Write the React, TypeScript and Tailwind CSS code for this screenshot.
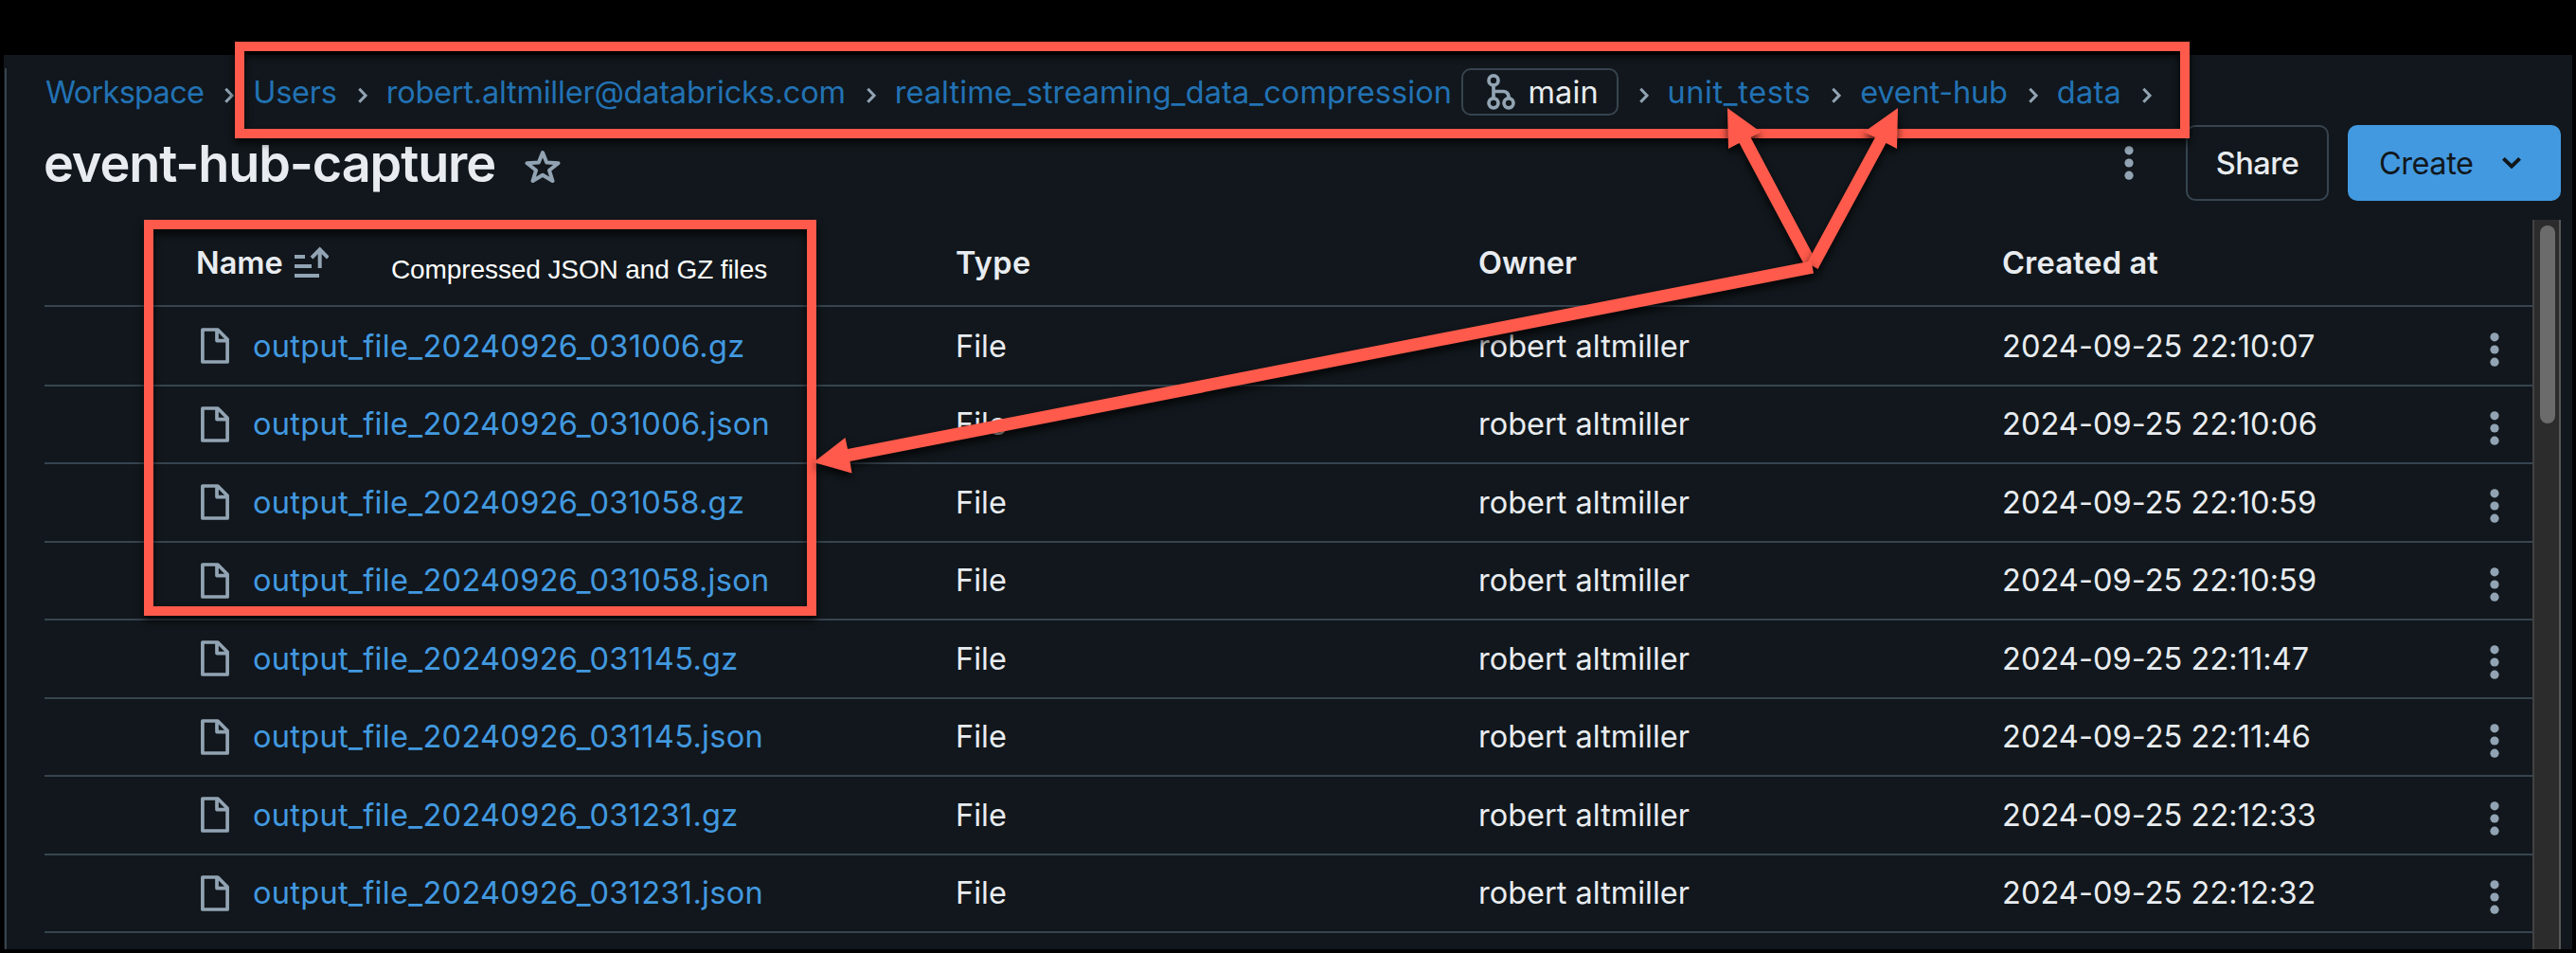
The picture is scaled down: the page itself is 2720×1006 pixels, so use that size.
import { Fragment } from "react";

const files = [
  { name: "output_file_20240926_031006.gz", created: "2024-09-25 22:10:07" },
  { name: "output_file_20240926_031006.json", created: "2024-09-25 22:10:06" },
  { name: "output_file_20240926_031058.gz", created: "2024-09-25 22:10:59" },
  { name: "output_file_20240926_031058.json", created: "2024-09-25 22:10:59" },
  { name: "output_file_20240926_031145.gz", created: "2024-09-25 22:11:47" },
  { name: "output_file_20240926_031145.json", created: "2024-09-25 22:11:46" },
  { name: "output_file_20240926_031231.gz", created: "2024-09-25 22:12:33" },
  { name: "output_file_20240926_031231.json", created: "2024-09-25 22:12:32" },
];

const crumbs = [
  { label: "Workspace", tracking: "tracking-[-0.7px]" },
  { label: "Users", tracking: "tracking-[-0.26px]" },
  { label: "robert.altmiller@databricks.com", tracking: "tracking-[-0.22px]" },
  { label: "realtime_streaming_data_compression", tracking: "tracking-[0.08px]", branch: "main" },
  { label: "unit_tests", tracking: "tracking-[0.6px]" },
  { label: "event-hub", tracking: "tracking-[-0.2px]" },
  { label: "data", tracking: "tracking-[0.3px]" },
];

function ChevronRight() {
  return (
    <svg className="mt-[7px] mr-5 ml-[22px] h-[18px] w-[10px] shrink-0" viewBox="0 0 10 18" fill="none" stroke="#92a4b3" strokeWidth="3">
      <path d="M1.3 1.8 8 8.8 1.3 15.8" />
    </svg>
  );
}

function BranchIcon() {
  return (
    <svg className="h-[38px] w-[30px]" viewBox="0 0 30 38" fill="none" stroke="#92a4b3" strokeWidth="3.7">
      <circle cx="7" cy="6.9" r="5" />
      <circle cx="7" cy="30.8" r="5" />
      <circle cx="23" cy="30.8" r="5" />
      <path d="M7 12v14M7 18.5h10.5a5.5 5.5 0 0 1 5.5 5.5v2" />
    </svg>
  );
}

function StarIcon() {
  return (
    <svg className="ml-[31px] h-[38px] w-[38px]" viewBox="0 0 38 38" fill="none" stroke="#92a4b3" strokeWidth="4" strokeLinejoin="round">
      <path d="M19 4 23.2 14.5 35.5 15.3 26 22.8 29.5 34 19 27.7 8.5 34 12 22.8 2.5 15.3 14.8 14.5Z" />
    </svg>
  );
}

function SortIcon() {
  return (
    <svg className="ml-3 h-[34px] w-9" viewBox="0 0 36 34" fill="none" stroke="#92a4b3" strokeWidth="4">
      <path d="M0 11h11M0 21h18M0 31h26M26.7 3v20M18 12.2 26.7 3.4 35.4 12.2" />
    </svg>
  );
}

function FileIcon() {
  return (
    <svg className="h-[38px] w-[30px]" viewBox="0 0 30 38" fill="none" stroke="#92a4b3" strokeWidth="3.7" strokeLinejoin="round">
      <path d="M1.9 2h16L28.1 12.3V36H1.9ZM17 2v11.6h11" />
    </svg>
  );
}

function KebabIcon() {
  return (
    <svg className="h-[38px] w-[10px]" viewBox="0 0 10 38" fill="#92a4b3">
      <circle cx="5" cy="5.8" r="4.6" />
      <circle cx="5" cy="19" r="4.6" />
      <circle cx="5" cy="32.2" r="4.6" />
    </svg>
  );
}

function Breadcrumbs() {
  return (
    <nav className="flex h-[50px] items-center whitespace-nowrap text-[#2272b4]">
      {crumbs.map((c) => (
        <Fragment key={c.label}>
          <a className={`pt-0.5 ${c.tracking}`}>{c.label}</a>
          {c.branch && (
            <span className="ml-[9.5px] flex h-[50px] w-[166px] items-center rounded-[10px] border-2 border-[#37444f] pl-[25px] text-[#e8ecf0]">
              <BranchIcon />
              <span className="ml-[14px] pt-0.5 tracking-[0.14px]">{c.branch}</span>
            </span>
          )}
          <ChevronRight />
        </Fragment>
      ))}
    </nav>
  );
}

const columns = "grid grid-cols-[802px_552px_553px_1fr] items-center border-b-2 border-[#37444f] pl-40";

function FileTable() {
  return (
    <div className="mt-5 flex h-[770px]">
      <div className="min-w-0 flex-1 overflow-hidden">
        <div className={`${columns} mb-px h-[92px] font-semibold`}>
          <span className="flex items-center">
            <span className="pt-0.5">Name</span>
            <SortIcon />
          </span>
          <span className="pt-0.5 tracking-[0.39px]">Type</span>
          <span className="pt-0.5 tracking-[-0.1px]">Owner</span>
          <span className="pt-0.5 tracking-[0.16px]">Created at</span>
        </div>
        {files.map((f) => (
          <div key={f.name} className={`${columns} h-[82.5px] whitespace-nowrap`}>
            <span className="flex items-center gap-[25px] pl-[5px]">
              <FileIcon />
              <a className="pt-px tracking-[0.33px] text-[#4299e0]">{f.name}</a>
            </span>
            <span className="pt-px">File</span>
            <span className="pt-px">robert altmiller</span>
            <span className="flex items-center justify-between pr-[35px]">
              <span className="pt-px tracking-[0.07px]">{f.created}</span>
              <span className="pt-2">
                <KebabIcon />
              </span>
            </span>
          </div>
        ))}
      </div>
      <div className="w-[30px] shrink-0 border-x-2 border-l-[#424242] border-r-[#575757] bg-[#2c2c2c] pt-[6px] pl-[6px]">
        <div className="h-[209px] w-4 rounded-full bg-[#6b6b6b]" />
      </div>
    </div>
  );
}

function Annotations() {
  return (
    <div className="pointer-events-none absolute inset-0">
      <div className="absolute top-[44px] left-[248px] h-[102px] w-[2064px] border-10 border-[#ff5a4b] drop-shadow-[0_5px_4px_rgba(0,0,0,0.75)]" />
      <div className="absolute top-[232px] left-[152px] h-[418px] w-[710px] border-10 border-[#ff5a4b] drop-shadow-[0_5px_4px_rgba(0,0,0,0.75)]" />
      <p className="absolute top-[269px] left-[413px] font-['Liberation_Sans',sans-serif] text-[28px] leading-8 tracking-[-0.1px] whitespace-nowrap text-white">
        Compressed JSON and GZ files
      </p>
      <svg className="absolute inset-0 h-full w-full" viewBox="0 0 2720 1006" fill="#ff5a4b">
        <path className="drop-shadow-[0_5px_4px_rgba(0,0,0,0.75)]" d="M1824 114 1859.5 139.5 1848.5 145 1918 276 1907 283 1836.5 151 1825 157Z" />
        <path className="drop-shadow-[0_5px_4px_rgba(0,0,0,0.75)]" d="M2004 114 2003 157 1991.5 151 1919.5 284 1908 277.5 1980 145 1968 139.5Z" />
        <path className="drop-shadow-[0_5px_4px_rgba(0,0,0,0.75)]" d="M859 488 892.5 462 895 474 1912.5 275.5 1915 288.5 897.5 487 899.5 499.5Z" />
      </svg>
    </div>
  );
}

export default function App() {
  return (
    <div className="relative h-[1006px] w-[2720px] overflow-hidden bg-black pt-[58px] pr-1 pb-1 pl-1 font-['Inter',sans-serif] text-[32.5px] leading-10 text-[#e8ecf0]">
      <div className="flex h-[944px] flex-col bg-[#11171c] pt-[14px] pl-px">
        <div className="h-[930px] border-l-2 border-[#37444f] pr-3 pl-10">
          <div className="pl-px">
            <Breadcrumbs />
          </div>
          <header className="mt-[10px] flex h-20 items-center">
            <h1 className="-ml-px pt-px text-[54px] leading-[79px] font-semibold tracking-[-1.1px]">event-hub-capture</h1>
            <div className="pt-2">
              <StarIcon />
            </div>
            <div className="ml-auto flex items-center">
              <KebabIcon />
              <button className="ml-[55px] h-20 w-[151px] rounded-[10px] border-2 border-[#37444f] pt-0.5 font-medium tracking-[-0.49px]">
                Share
              </button>
              <button className="ml-5 flex h-20 w-[225px] items-center rounded-[10px] bg-[#4299e0] pl-[33px] tracking-[-0.45px] text-[#11171c]">
                <span className="pt-0.5">Create</span>
                <svg className="ml-[30px] h-3 w-5" viewBox="0 0 20 12" fill="none" stroke="#11171c" strokeWidth="4">
                  <path d="M1.4 1.4 10 9.6 18.6 1.4" />
                </svg>
              </button>
            </div>
          </header>
          <FileTable />
        </div>
      </div>
      <Annotations />
    </div>
  );
}
